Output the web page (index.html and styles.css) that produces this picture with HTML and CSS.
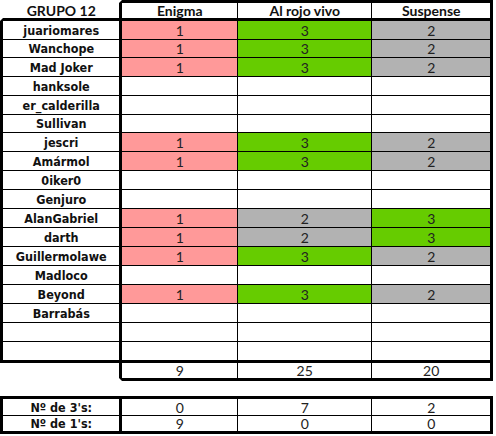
FILE: index.html
```html
<!DOCTYPE html>
<html>
<head>
<meta charset="utf-8">
<link rel="stylesheet" href="styles.css">
</head>
<body>
<table class="sheet">
  <tr class="hdr">
    <td class="name top">GRUPO 12</td>
    <td class="c1">Enigma</td>
    <td class="c2">Al rojo vivo</td>
    <td class="c3">Suspense</td>
  </tr>
  <tr><td class="name">juariomares</td><td class="c1 p">1</td><td class="c2 g">3</td><td class="c3 s">2</td></tr>
  <tr class="short"><td class="name">Wanchope</td><td class="c1 p">1</td><td class="c2 g">3</td><td class="c3 s">2</td></tr>
  <tr><td class="name">Mad Joker</td><td class="c1 p">1</td><td class="c2 g">3</td><td class="c3 s">2</td></tr>
  <tr><td class="name">hanksole</td><td class="c1"></td><td class="c2"></td><td class="c3"></td></tr>
  <tr><td class="name">er_calderilla</td><td class="c1"></td><td class="c2"></td><td class="c3"></td></tr>
  <tr class="short"><td class="name">Sullivan</td><td class="c1"></td><td class="c2"></td><td class="c3"></td></tr>
  <tr><td class="name">jescri</td><td class="c1 p">1</td><td class="c2 g">3</td><td class="c3 s">2</td></tr>
  <tr><td class="name">Amármol</td><td class="c1 p">1</td><td class="c2 g">3</td><td class="c3 s">2</td></tr>
  <tr><td class="name">0iker0</td><td class="c1"></td><td class="c2"></td><td class="c3"></td></tr>
  <tr><td class="name">Genjuro</td><td class="c1"></td><td class="c2"></td><td class="c3"></td></tr>
  <tr><td class="name">AlanGabriel</td><td class="c1 p">1</td><td class="c2 s">2</td><td class="c3 g">3</td></tr>
  <tr><td class="name">darth</td><td class="c1 p">1</td><td class="c2 s">2</td><td class="c3 g">3</td></tr>
  <tr><td class="name">Guillermolawe</td><td class="c1 p">1</td><td class="c2 g">3</td><td class="c3 s">2</td></tr>
  <tr><td class="name">Madloco</td><td class="c1"></td><td class="c2"></td><td class="c3"></td></tr>
  <tr><td class="name">Beyond</td><td class="c1 p">1</td><td class="c2 g">3</td><td class="c3 s">2</td></tr>
  <tr><td class="name">Barrabás</td><td class="c1"></td><td class="c2"></td><td class="c3"></td></tr>
  <tr><td class="name"></td><td class="c1"></td><td class="c2"></td><td class="c3"></td></tr>
  <tr class="last"><td class="name"></td><td class="c1"></td><td class="c2"></td><td class="c3"></td></tr>
  <tr class="tot">
    <td class="blank"></td>
    <td class="c1">9</td>
    <td class="c2">25</td>
    <td class="c3">20</td>
  </tr>
</table>

<table class="sheet stats">
  <tr class="first"><td class="name">Nº de 3's:</td><td class="c1">0</td><td class="c2">7</td><td class="c3">2</td></tr>
  <tr class="last"><td class="name">Nº de 1's:</td><td class="c1">9</td><td class="c2">0</td><td class="c3">0</td></tr>
</table>
</body>
</html>
```

FILE: styles.css
```css
html, body {
  margin: 0;
  padding: 0;
  background: #fff;
}

.sheet {
  border-collapse: separate;
  border-spacing: 0;
  table-layout: fixed;
  width: 493px;
}

.sheet td {
  padding: 0;
  height: 18px;
  text-align: center;
  vertical-align: middle;
  font-family: "Lato", "Liberation Sans", sans-serif;
  font-size: 14px;
  color: #222;
  line-height: 15px;
  border-bottom: 1px solid #000;
  border-right: 1px solid #000;
  overflow: hidden;
  white-space: nowrap;
}

.sheet td.name {
  width: 116px;
  border-left: 3px solid #000;
  border-right: 3px solid #000;
  font-family: "DejaVu Sans Condensed", "DejaVu Sans", sans-serif;
  font-weight: bold;
  font-size: 12.5px;
  color: #111;
}

.sheet td.c1 { width: 114px; }
.sheet td.c2 { width: 133px; }
.sheet td.c3 { width: 117px; border-right: 3px solid #000; }

.sheet .short td { height: 17px; }

.p { background: #ff9999; }
.g { background: #66cc00; }
.s { background: #b2b2b2; }

.hdr td {
  height: 14px;
  border-top: 3px solid #000;
  border-bottom: 3px solid #000;
  font-weight: bold;
  color: #111;
}

.sheet .hdr td.name.top {
  border-top: 3px solid #fff;
  border-left: 3px solid #fff;
  font-family: "Lato", "Liberation Sans", sans-serif;
  font-size: 14px;
}

.last td {
  border-bottom: 3px solid #000;
}

.tot td {
  height: 15px;
  border-bottom: 3px solid #000;
}

.sheet .tot td.blank {
  width: 116px;
  border-left: 3px solid #fff;
  border-bottom: 3px solid #fff;
  border-right: 3px solid #000;
}

.stats {
  margin-top: 15px;
}

.stats .first td {
  height: 16px;
  border-top: 3px solid #000;
}

.stats .last td {
  height: 15px;
}
```
